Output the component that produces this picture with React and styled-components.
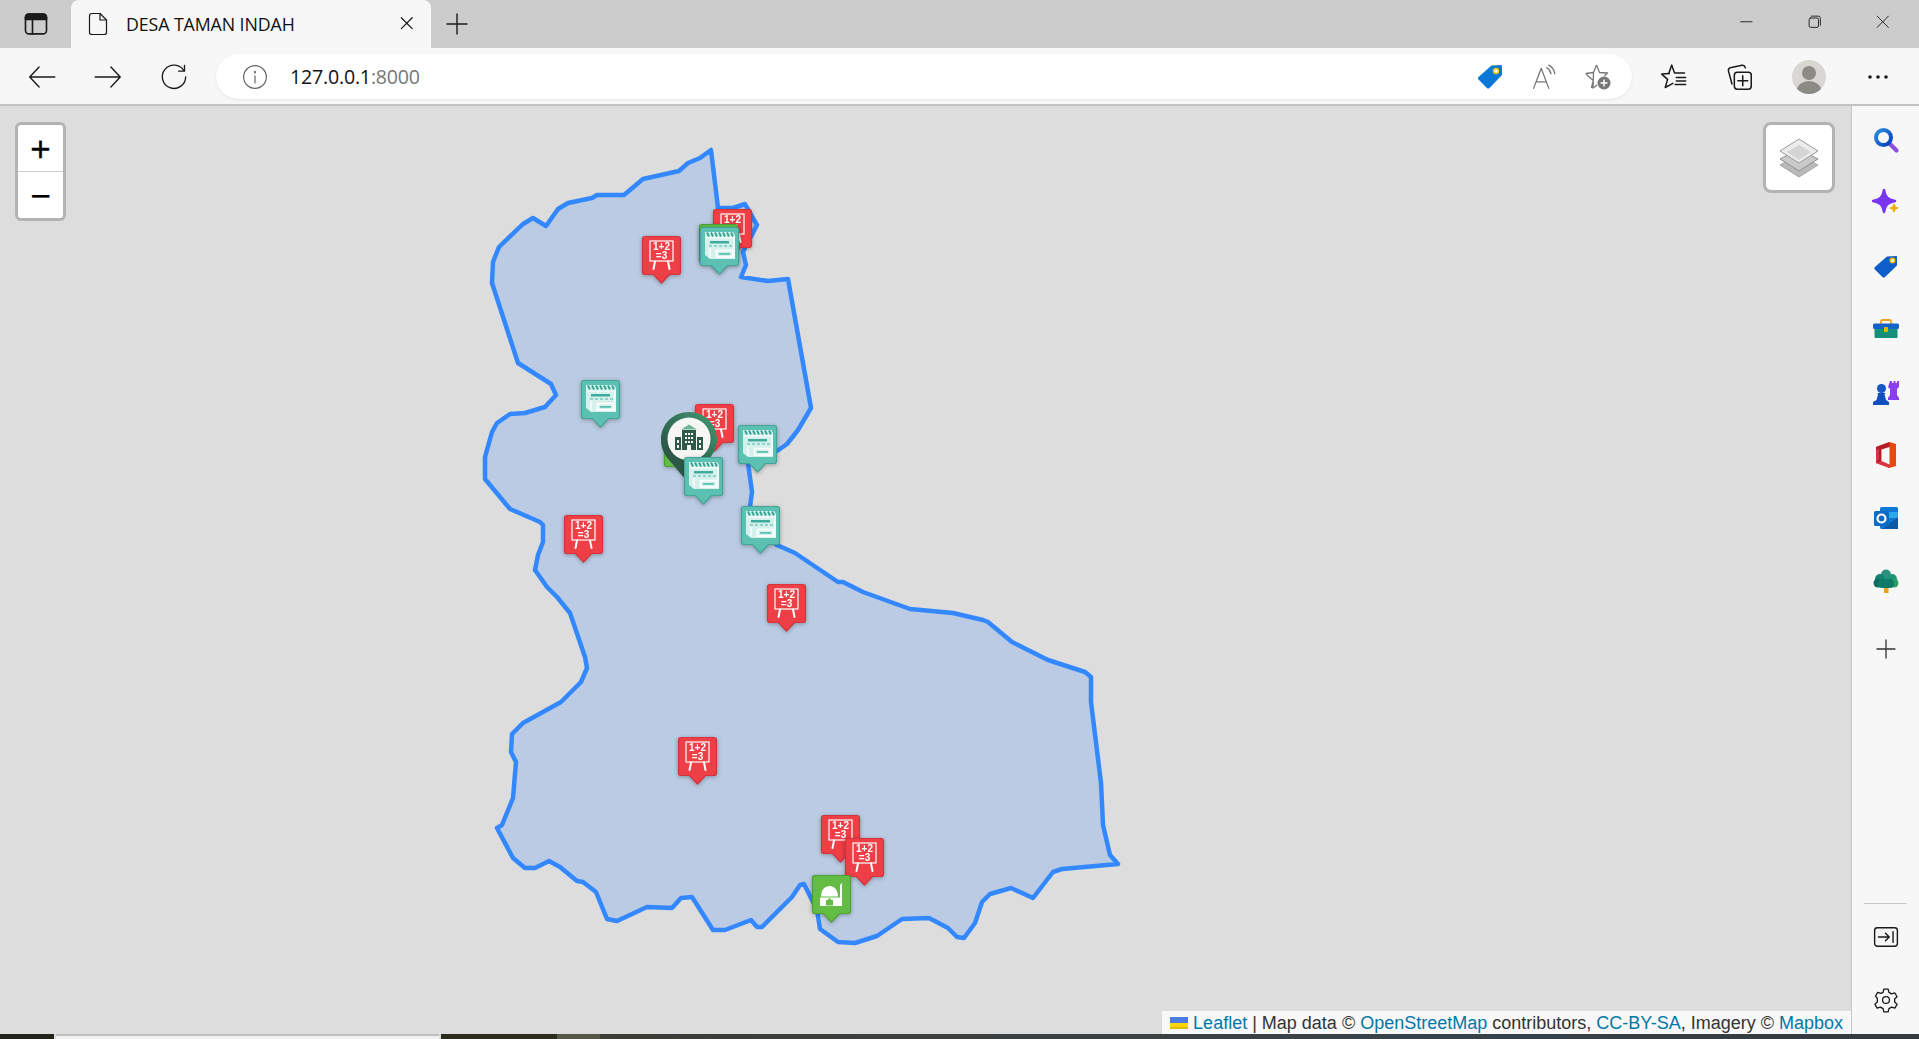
import React from "react";
import styled, { createGlobalStyle } from "styled-components";

const GlobalStyle = createGlobalStyle`
  html, body { margin: 0; padding: 0; background: #ddd; overflow: hidden; }
  #root { width: 1919px; height: 1039px; }
`;

const Page = styled.div`
  width: 1919px;
  height: 1039px;
  display: flex;
  flex-direction: column;
  font-family: "Open Sans", "Noto Sans", sans-serif;
  color: #111;
`;

const TabStrip = styled.div`
  height: 48px;
  flex: none;
  display: flex;
  background: #cccccc;
`;

const StripButton = styled.div`
  width: ${(p) => p.$w}px;
  height: 47px;
  flex: none;
  display: flex;
  align-items: center;
  justify-content: center;
`;

const Tab = styled.div`
  width: 360px;
  height: 48px;
  flex: none;
  background: #f7f7f7;
  border-radius: 8px 8px 0 0;
  display: flex;
  align-items: center;
  padding: 0 13px 0 15px;
  box-sizing: border-box;
`;

const TabTitle = styled.span`
  font-size: 17.8px;
  margin-left: 16px;
  flex: 1;
  white-space: nowrap;
  letter-spacing: -0.1px;
`;

const WindowControls = styled.div`
  margin-left: auto;
  display: flex;
`;

const Toolbar = styled.div`
  height: 58px;
  flex: none;
  box-sizing: border-box;
  display: flex;
  align-items: center;
  padding: 1px 8px 0 9px;
  background: #f7f7f7;
  border-bottom: 2px solid #c2c2c2;
`;

const ToolButton = styled.div`
  width: ${(p) => p.$w}px;
  height: 45px;
  flex: none;
  display: flex;
  align-items: center;
  justify-content: center;
`;

const AddressBar = styled.div`
  width: 1416px;
  height: 45px;
  margin: 0 8px 0 9px;
  flex: none;
  box-sizing: border-box;
  padding: 0 8px 0 26px;
  display: flex;
  align-items: center;
  background: #fff;
  border-radius: 23px;
  box-shadow: 0 1px 3px rgba(0, 0, 0, 0.08);
`;

const Url = styled.span`
  margin-left: 22px;
  flex: 1;
  font-size: 19.6px;
  letter-spacing: -0.2px;
`;

const UrlPort = styled.span`
  color: #767676;
`;

const Body = styled.div`
  flex: 1;
  display: flex;
  min-height: 0;
`;

const MapPane = styled.div`
  flex: 1;
  position: relative;
  overflow: hidden;
  background: #dddddd;
`;

const Boundary = styled.svg`
  position: absolute;
  inset: 0;
  width: 100%;
  height: 100%;
`;

const ZoomControl = styled.div`
  position: absolute;
  left: 15px;
  top: 16px;
  width: 45px;
  border: 3px solid #b3b3b3;
  border-radius: 6px;
  background: #fff;
  overflow: hidden;
`;

const ZoomButton = styled.div`
  height: 46px;
  display: flex;
  align-items: center;
  justify-content: center;
  font-family: "Liberation Sans", sans-serif;
  font-size: 35px;
  font-weight: 400;
  line-height: 1;
  color: #000;
  -webkit-text-stroke: 0.3px #000;
  &:first-child {
    border-bottom: 1px solid #ccc;
  }
`;

const LayersControl = styled.div`
  position: absolute;
  right: 16px;
  top: 16px;
  width: 66px;
  height: 65px;
  border: 3px solid #b3b3b3;
  border-radius: 8px;
  background: #fff;
  display: flex;
  align-items: center;
  justify-content: center;
`;

const Attribution = styled.div`
  position: absolute;
  right: 0;
  bottom: 0;
  height: 23px;
  box-sizing: border-box;
  padding: 1px 8px 0;
  display: flex;
  align-items: center;
  gap: 5px;
  background: rgba(255, 255, 255, 0.8);
  font-family: "Liberation Sans", sans-serif;
  font-size: 18px;
  color: #333;
  white-space: nowrap;
`;

const AttrLink = styled.a`
  color: #0078a8;
`;

const Pin = styled.div`
  position: absolute;
  left: ${(p) => p.$x - 3}px;
  top: ${(p) => p.$y - 109}px;
  width: 45px;
  height: 54px;
  filter: drop-shadow(0 1px 2px rgba(0, 0, 0, 0.3)) blur(0.35px);
`;

const SchoolMark = styled.div`
  position: absolute;
  left: 658px;
  top: 303px;
  width: 62px;
  height: 80px;
  filter: blur(0.4px);
`;

const SidePanel = styled.aside`
  width: 68px;
  flex: none;
  box-sizing: border-box;
  padding-top: 2px;
  display: flex;
  flex-direction: column;
  align-items: center;
  background: #f7f7f7;
  border-left: 1px solid #c6c6c6;
`;

const SideButton = styled.div`
  width: 100%;
  height: 63px;
  flex: none;
  margin-top: ${(p) => (p.$pushed ? 5 : 0)}px;
  display: flex;
  align-items: center;
  justify-content: center;
`;

const SideFoot = styled.div`
  margin-top: auto;
  width: 100%;
  padding-bottom: 3px;
  display: flex;
  flex-direction: column;
  align-items: center;
`;

const SideRule = styled.div`
  width: 43px;
  height: 1px;
  margin-bottom: 1px;
  background: #c8c8c8;
`;

const BottomEdge = styled.div`
  height: 5px;
  flex: none;
  display: flex;
`;

const EdgePiece = styled.div`
  width: ${(p) => p.$w}px;
  flex: ${(p) => (p.$w ? "none" : 1)};
  background: ${(p) => p.$bg};
  border-top: ${(p) => (p.$light ? "2px solid #c0c0c0" : "none")};
`;

const boundaryPoints = [
  [711, 150], [718, 208], [733, 208], [745, 204], [757, 225], [743, 252], [746, 265], [741, 277],
  [768, 281], [788, 279], [811, 408], [798, 430], [787, 444], [777, 451], [748, 463], [752, 492],
  [750, 507], [758, 530], [777, 545], [795, 553], [838, 582], [843, 582], [863, 592], [910, 609],
  [953, 613], [983, 620], [988, 622], [1012, 642], [1048, 660], [1085, 672], [1091, 677], [1091, 702],
  [1101, 783], [1103, 825], [1110, 855], [1118, 864], [1062, 869], [1053, 872], [1033, 898], [1011, 888],
  [990, 894], [982, 902], [975, 923], [964, 938], [957, 937], [948, 928], [929, 918], [902, 919],
  [877, 936], [855, 943], [838, 942], [820, 929], [817, 910], [804, 884], [800, 885], [792, 897],
  [762, 927], [757, 927], [751, 920], [725, 930], [713, 930], [692, 897], [681, 898], [672, 908],
  [647, 907], [617, 921], [607, 919], [596, 892], [583, 882], [577, 881], [560, 867], [549, 861],
  [535, 868], [525, 868], [513, 858], [497, 828], [502, 825], [513, 798], [516, 762], [511, 752],
  [512, 734], [523, 723], [561, 702], [581, 682], [587, 668], [585, 657], [570, 613], [557, 597],
  [547, 587], [535, 570], [538, 555], [543, 542], [543, 525], [540, 522], [510, 509], [485, 479],
  [485, 457], [492, 432], [497, 423], [510, 414], [525, 413], [545, 407], [556, 395], [551, 384],
  [518, 363], [492, 283], [493, 262], [499, 247], [523, 224], [533, 218], [546, 226], [558, 209],
  [568, 203], [592, 198], [597, 195], [624, 195], [643, 179], [679, 171], [688, 163], [700, 158],
]
  .map((p) => p.join(","))
  .join(" ");

// painted in this order, later ones lie on top
const markers = [
  { kind: "red", x: 713, y: 209 },
  { kind: "green", x: 699, y: 224 },
  { kind: "teal", x: 700, y: 227 },
  { kind: "red", x: 642, y: 236 },
  { kind: "teal", x: 581, y: 380 },
  { kind: "green", x: 664, y: 428 },
  { kind: "red", x: 695, y: 404 },
  { kind: "school" },
  { kind: "teal", x: 738, y: 425 },
  { kind: "teal", x: 684, y: 457 },
  { kind: "teal", x: 741, y: 506 },
  { kind: "red", x: 564, y: 515 },
  { kind: "red", x: 767, y: 584 },
  { kind: "red", x: 678, y: 737 },
  { kind: "red", x: 821, y: 815 },
  { kind: "red", x: 845, y: 838 },
  { kind: "mosque", x: 812, y: 875 },
];

const pinColors = {
  red: ["#ee3e46", "#d5343b"],
  teal: ["#5cc0b3", "#43a597"],
  green: ["#63bd44", "#4ca233"],
  mosque: ["#63bd44", "#4ca233"],
};

const BoardGlyph = () => (
  <g>
    <rect x="11" y="8" width="23" height="20" fill="none" stroke="#fff" strokeWidth="1.2" />
    <text x="22.5" y="17" fill="#fff" fontFamily="Liberation Sans" fontWeight="700" fontSize="10" textAnchor="middle">1+2</text>
    <text x="22.5" y="26" fill="#fff" fontFamily="Liberation Sans" fontWeight="700" fontSize="10" textAnchor="middle">=3</text>
    <path d="M16 28.500 14.500 36M29 28.500 30.500 36" stroke="#fff" strokeWidth="2" strokeLinecap="round" fill="none" />
  </g>
);

const StallGlyph = () => (
  <g>
    <path d="M8 8h28l2 3v24H13l-5-4z" fill="#d6f1ec" />
    <path d="M10 8.500l2 4M14 8.500l2 4M18 8.500l2 4M22 8.500l2 4M26 8.500l2 4M30 8.500l2 4M34 8.500l2 4" stroke="#3aa596" strokeWidth="2" />
    <path d="M9 14h28" stroke="#fff" strokeWidth="1" />
    <rect x="13" y="17" width="19" height="2.500" fill="#3fab9c" />
    <path d="M12 22h3M17 22h3M22 22h3M27 22h3M32 22h3" stroke="#76cbbf" strokeWidth="1.500" />
    <path d="M13 24v10M37 12v22" stroke="#fff" strokeWidth="1.200" />
    <rect x="19.500" y="26.500" width="16" height="6.500" fill="#d6f1ec" stroke="#fff" strokeWidth="1.500" />
    <rect x="22" y="29" width="11" height="1.800" fill="#5cc0b3" />
  </g>
);

const MosqueGlyph = () => (
  <g>
    <path d="M12 24.500c0-6.500 4-10.500 8.500-10.500S29 18 29 24.500z" fill="#fff" />
    <path d="M11 25.500h20V34H11z" fill="#fff" />
    <path d="M31 13l2-2v23h-2z" fill="#fff" />
    <path d="M17 33.500V28h1.500l2-2 2 2H24v5.500z" fill="#63bd44" />
  </g>
);

const MapPin = ({ kind, x, y }) => {
  const [fill, edge] = pinColors[kind];
  return (
    <Pin $x={x} $y={y}>
      <svg width="45" height="54" viewBox="0 0 45 54">
        <path
          d="M6 3.500h33a2.500 2.500 0 0 1 2.500 2.500v33a2.500 2.500 0 0 1-2.500 2.500h-8.500L22.500 50l-8-8.500H6A2.500 2.500 0 0 1 3.500 39V6A2.500 2.500 0 0 1 6 3.500z"
          fill={fill}
          stroke={edge}
          strokeWidth="1.2"
        />
        {kind === "red" && <BoardGlyph />}
        {kind === "teal" && <StallGlyph />}
        {kind === "mosque" && <MosqueGlyph />}
      </svg>
    </Pin>
  );
};

const SchoolPin = () => (
  <SchoolMark>
    <svg width="62" height="80" viewBox="0 0 62 80">
      <defs>
        <linearGradient id="schoolRing" x1="0.8" y1="0" x2="0.1" y2="1">
          <stop offset="0" stopColor="#3f9470" />
          <stop offset="0.6" stopColor="#2d5c48" />
          <stop offset="1" stopColor="#2e4f40" />
        </linearGradient>
      </defs>
      <path d="M31 3C15 3 3 15 3 31c0 8 3 14 8 20l23 27c1-9 5-17 11-23 8-6 14-14 14-24C59 15 47 3 31 3z" fill="url(#schoolRing)" />
      <circle cx="31" cy="30" r="21.500" fill="#f6f6f4" />
      <path d="M31 15.500l8 5h-16z" fill="#6fb596" />
      <path d="M24 21h14v20h-5v-5h-4v5h-5z" fill="#2e5a48" />
      <path d="M17 28h6v13h-6zM39 28h6v13h-6z" fill="#2e5a48" />
      <path d="M27 24h2v2h-2zM30 24h2v2h-2zM33 24h2v2h-2zM27 28h2v2h-2zM30 28h2v2h-2zM33 28h2v2h-2zM27 32h2v2h-2zM30 32h2v2h-2zM33 32h2v2h-2zM19 31h2v3h-2zM41 31h2v3h-2zM19 36h2v3h-2zM41 36h2v3h-2z" fill="#f6f6f4" />
    </svg>
  </SchoolMark>
);

const Line = ({ size = 24, children, stroke = "#1a1a1a", sw = 1.4 }) => (
  <svg width={size} height={size} viewBox="0 0 24 24" fill="none" stroke={stroke} strokeWidth={sw} strokeLinecap="round" strokeLinejoin="round">
    {children}
  </svg>
);

const SideIcon = ({ children }) => <svg width="28" height="28" viewBox="0 0 28 28">{children}</svg>;

const sideIcons = [
  <SideIcon key="search">
    <defs>
      <linearGradient id="lens" x1="0" y1="0" x2="1" y2="1">
        <stop offset="0" stopColor="#2a8fe0" />
        <stop offset="1" stopColor="#0a3fb8" />
      </linearGradient>
    </defs>
    <path d="M17 17l7.500 7.500" stroke="#8a4fe0" strokeWidth="4.200" strokeLinecap="round" />
    <circle cx="11.500" cy="11.500" r="7.500" fill="none" stroke="url(#lens)" strokeWidth="4" />
  </SideIcon>,
  <SideIcon key="spark">
    <path d="M12 1c1.200 7 3.500 9.600 11 11-7.500 1.400-9.800 4-11 11-1.200-7-3.500-9.600-11-11 7.500-1.400 9.800-4 11-11z" fill="#7a35f0" stroke="#7a35f0" strokeWidth="2.500" strokeLinejoin="round" />
    <path d="M22 15c.4 2.700 1.300 3.600 4 4-2.700.4-3.600 1.300-4 4-.4-2.700-1.300-3.600-4-4 2.700-.4 3.600-1.300 4-4z" fill="#f2a900" stroke="#f2a900" strokeWidth="1.200" strokeLinejoin="round" />
  </SideIcon>,
  <SideIcon key="tag">
    <path d="M15 4.500l9-.5c.8 0 1 .3 1 1v8.500L13 25c-.8.8-1.800.8-2.600 0l-7.500-7.500c-.8-.8-.8-1.800 0-2.600z" fill="#0c5fc9" />
    <circle cx="20.500" cy="8.500" r="2.300" fill="#fff" stroke="#f2b400" strokeWidth="1.400" />
  </SideIcon>,
  <SideIcon key="toolbox">
    <path d="M9 9V6.500C9 5.500 9.500 5 10.500 5h7c1 0 1.500.5 1.500 1.500V9" fill="none" stroke="#eda41c" strokeWidth="1.800" />
    <rect x="1" y="8.500" width="26" height="5.500" rx="1.500" fill="#1463c8" />
    <path d="M2.500 14h23v7.500c0 1-.5 1.500-1.500 1.500H4c-1 0-1.500-.5-1.500-1.500z" fill="#17907a" />
    <rect x="12" y="12" width="4" height="5" rx="1" fill="#f2b400" />
  </SideIcon>,
  <SideIcon key="chess">
    <path d="M18 3h2v2h1.500V3h2v2H25V3h2v6l-2 2v6l2 3v2H16v-2l2-3v-6l-2-2z" fill="#8a3ff0" />
    <circle cx="9.500" cy="10.500" r="4.500" fill="#1658c8" />
    <path d="M5.500 15h8l-1 1.500 1.500 5.500 3 2v3H1v-3l3.500-2 1.500-5.500z" fill="#0f4fc0" />
  </SideIcon>,
  <SideIcon key="office">
    <path d="M17.500 1L4 6v16l13.500 5L24 25V3z" fill="#e64a0c" />
    <path d="M17.500 1L4 6v16l5.500-2V8.500L17.500 6z" fill="#b11e28" />
    <path d="M4 22l13.500 5v-3.500L9.500 20z" fill="#d8344a" />
    <path d="M9.500 8.500l8-2.500v17.500l-8-3.500z" fill="#f7f7f7" />
    <path d="M4 9l3-1.500v11L4 21z" fill="#d3354f" />
  </SideIcon>,
  <SideIcon key="outlook">
    <rect x="8" y="3" width="18" height="22" rx="1.500" fill="#0f78d4" />
    <path d="M8 8h18v6H8z" fill="#28a8ea" />
    <path d="M26 13v12H10z" fill="#0a5aa8" />
    <rect x="2" y="7" width="15" height="15" rx="1.500" fill="#0a6cc8" />
    <circle cx="9.500" cy="14.500" r="4" fill="none" stroke="#fff" strokeWidth="2.200" />
  </SideIcon>,
  <SideIcon key="tree">
    <rect x="12" y="20" width="4.500" height="6" fill="#e8a21a" />
    <circle cx="14" cy="7.500" r="5" fill="#2e8f82" />
    <circle cx="8" cy="12" r="5" fill="#148272" />
    <circle cx="20" cy="12" r="5" fill="#1f9372" />
    <circle cx="6" cy="16" r="4.500" fill="#0c6e62" />
    <circle cx="22" cy="16" r="4.500" fill="#2b9e63" />
    <rect x="6" y="12" width="16" height="9" rx="4" fill="#0f7a68" />
  </SideIcon>,
];

export default function App() {
  return (
    <Page>
      <GlobalStyle />
      <TabStrip>
        <StripButton $w={71}>
          <Line size={28} sw={1.4}>
            <rect x="3" y="3.500" width="18" height="17" rx="3" />
            <path d="M3 6.500c0-2 1-3 3-3h12c2 0 3 1 3 3V8H3z" fill="#1a1a1a" />
            <path d="M9 8v12.500" />
          </Line>
        </StripButton>
        <Tab>
          <Line size={24} sw={1.2}>
            <path d="M3.500 4C3.500 2.300 4.500 1.500 6 1.500h8l6.500 6.500v12.500c0 1.500-1 2-2.500 2H6c-1.500 0-2.500-.5-2.500-2z" />
            <path d="M14 1.500V8h6.500" />
          </Line>
          <TabTitle>DESA TAMAN INDAH</TabTitle>
          <Line size={20} sw={1.5}>
            <path d="M4 4.500l13 13M17 4.500l-13 13" />
          </Line>
        </Tab>
        <StripButton $w={51}>
          <Line size={24} sw={1.4}>
            <path d="M12 2v20M2 12h20" />
          </Line>
        </StripButton>
        <WindowControls>
          <StripButton $w={68}>
            <Line size={18} sw={1.2}>
              <path d="M1 9h15" />
            </Line>
          </StripButton>
          <StripButton $w={68}>
            <Line size={18} sw={1.2}>
              <rect x="1.500" y="4" width="12.500" height="12.500" rx="2" />
              <path d="M4.500 1.500h9c2 0 3 1 3 3v9" />
            </Line>
          </StripButton>
          <StripButton $w={68}>
            <Line size={18} sw={1.2}>
              <path d="M1.500 1.500l15 15M16.500 1.500l-15 15" />
            </Line>
          </StripButton>
        </WindowControls>
      </TabStrip>

      <Toolbar>
        <ToolButton $w={66}>
          <Line size={28} sw={1.2}>
            <path d="M23 12H1.500M9.500 3.500L1.500 12l8 8.500" />
          </Line>
        </ToolButton>
        <ToolButton $w={66}>
          <Line size={28} sw={1.2}>
            <path d="M1 12h21.500M14.500 3.500l8 8.500-8 8.500" />
          </Line>
        </ToolButton>
        <ToolButton $w={66}>
          <Line size={28} sw={1.15}>
            <path d="M20.500 6.500A10 10 0 1 0 22 12" />
            <path d="M21 2v5h-5" />
          </Line>
        </ToolButton>
        <AddressBar>
          <Line size={26} stroke="#666" sw={1.1}>
            <circle cx="12" cy="12" r="10.500" />
            <path d="M12 11v6.500" />
            <path d="M12 7.200v.6" strokeWidth="1.800" />
          </Line>
          <Url>
            127.0.0.1<UrlPort>:8000</UrlPort>
          </Url>
          <ToolButton $w={57}>
            <svg width="26" height="26" viewBox="0 0 26 26">
              <path d="M14.500 1.500l9-.5c1 0 1.500.5 1.500 1.500v8.500L12.500 24c-.8.800-1.800.8-2.600 0L1.500 15.500c-.8-.8-.8-1.800 0-2.600z" fill="#0a78d6" />
              <circle cx="19" cy="7" r="2.500" fill="#fff" stroke="#f5c400" strokeWidth="1.500" />
            </svg>
          </ToolButton>
          <ToolButton $w={53}>
            <Line size={26} stroke="#777" sw={1.2}>
              <path d="M1.500 22.500L8.500 4l7 18.500M4 16.500h9" />
              <path d="M13.500 3.500c2 1 3.500 3 4 5.500M15.500 1c3 1.500 5 4.500 5.500 8" />
            </Line>
          </ToolButton>
          <ToolButton $w={53}>
            <svg width="28" height="28" viewBox="0 0 28 28">
              <path d="M12.500 2l3 7.500 8 .5-3 3M9 25l-1.500-.5 1.800-7L3 12l-1-1.500 7.500-1z" fill="none" stroke="#777" strokeWidth="1.300" strokeLinejoin="round" />
              <path d="M12.500 2L9.500 9.500M9.300 24.800l4-2.800" fill="none" stroke="#777" strokeWidth="1.300" />
              <circle cx="20" cy="20" r="6.500" fill="#777" />
              <path d="M20 16.500v7M16.500 20h7" stroke="#fff" strokeWidth="1.500" />
            </svg>
          </ToolButton>
        </AddressBar>
        <ToolButton $w={68}>
          <Line size={28} sw={1.3}>
            <path d="M10 2l2.500 6.500H21M8 9L1.500 9.500l5 4.500L4.500 21l6.500-3.500" />
            <path d="M10 2L7.500 9M14 12.500h8M14 15.500h8M13 18.500h9" />
          </Line>
        </ToolButton>
        <ToolButton $w={62}>
          <Line size={28} sw={1.3}>
            <path d="M6 18L3 7c-.4-1.500.5-2.500 1.500-3l10-2c1.500-.3 2.500.5 3 2" />
            <rect x="8" y="8" width="14.500" height="14.500" rx="2.500" />
            <path d="M15.200 11v8.500M11 15.200h8.500" />
          </Line>
        </ToolButton>
        <ToolButton $w={78}>
          <svg width="34" height="34" viewBox="0 0 34 34">
            <defs>
              <clipPath id="avatar">
                <circle cx="17" cy="17" r="17" />
              </clipPath>
            </defs>
            <circle cx="17" cy="17" r="17" fill="#d8d7d3" />
            <g clipPath="url(#avatar)" fill="#8b8a85">
              <circle cx="17" cy="13" r="7" />
              <ellipse cx="17" cy="30" rx="12" ry="9" />
            </g>
          </svg>
        </ToolButton>
        <ToolButton $w={60}>
          <svg width="22" height="6" viewBox="0 0 22 6" fill="#1a1a1a">
            <circle cx="3" cy="3" r="1.800" />
            <circle cx="11" cy="3" r="1.800" />
            <circle cx="19" cy="3" r="1.800" />
          </svg>
        </ToolButton>
      </Toolbar>

      <Body>
        <MapPane>
          <Boundary viewBox="0 106 1851 928" preserveAspectRatio="xMinYMin slice">
            <polygon
              points={boundaryPoints}
              fill="#3388ff"
              fillOpacity="0.2"
              stroke="#3388ff"
              strokeWidth="4.5"
              strokeLinejoin="round"
            />
          </Boundary>
          {markers.map((m, i) =>
            m.kind === "school" ? <SchoolPin key={i} /> : <MapPin key={i} {...m} />
          )}
          <ZoomControl>
            <ZoomButton>+</ZoomButton>
            <ZoomButton>−</ZoomButton>
          </ZoomControl>
          <LayersControl>
            <svg width="42" height="40" viewBox="0 0 42 40">
              <path d="M21 17L40 27 21 39 2 27z" fill="#b9b9b9" stroke="#a8a8a8" />
              <path d="M21 11L40 21 21 33 2 21z" fill="#c9c9c9" stroke="#8f8f8f" />
              <path d="M21 1L40 13 21 25 2 13z" fill="#ececec" stroke="#9a9a9a" />
              <path d="M21 7L33 14 21 22 9 14z" fill="#d4d4d4" />
            </svg>
          </LayersControl>
          <Attribution>
            <svg width="18" height="12" viewBox="0 0 18 12">
              <path d="M0 0h18v6H0z" fill="#4c7be1" />
              <path d="M0 6h18v4H0z" fill="#ffd500" />
              <path d="M0 10h18v2H0z" fill="#e0bc00" />
            </svg>
            <span>
              <AttrLink>Leaflet</AttrLink> | Map data © <AttrLink>OpenStreetMap</AttrLink> contributors,{" "}
              <AttrLink>CC-BY-SA</AttrLink>, Imagery © <AttrLink>Mapbox</AttrLink>
            </span>
          </Attribution>
        </MapPane>
        <SidePanel>
          {sideIcons.map((icon) => (
            <SideButton key={icon.key}>{icon}</SideButton>
          ))}
          <SideButton $pushed>
            <Line size={24} stroke="#333" sw={1.3}>
              <path d="M12 3v18M3 12h18" />
            </Line>
          </SideButton>
          <SideFoot>
            <SideRule />
            <SideButton>
              <Line size={26} sw={1.3}>
                <rect x="1.500" y="3.500" width="21" height="17" rx="2.500" />
                <path d="M5 12h10M11.500 8.500L15 12l-3.500 3.500M18.500 7v10" />
              </Line>
            </SideButton>
            <SideButton>
              <Line size={26} sw={1.2}>
                <circle cx="12" cy="12" r="3.200" />
                <path d="M10 2h4l.7 3 2.500 1.400 3-.9 2 3.500-2.200 2.100v2.800l2.200 2.100-2 3.500-3-.9-2.500 1.400-.7 3h-4l-.7-3-2.500-1.400-3 .9-2-3.500 2.200-2.100V10.600L2.300 8.500l2-3.500 3 .9L9.300 5z" />
              </Line>
            </SideButton>
          </SideFoot>
        </SidePanel>
      </Body>

      <BottomEdge>
        <EdgePiece $w={54} $bg="#22231a" />
        <EdgePiece $w={2} $bg="#dddddd" />
        <EdgePiece $w={383} $bg="#f0f0f0" $light />
        <EdgePiece $w={2} $bg="#dddddd" />
        <EdgePiece $w={116} $bg="#2b2b1f" />
        <EdgePiece $w={43} $bg="#56574b" />
        <EdgePiece $bg="linear-gradient(90deg, #3c3d36, #3a434a 60%, #333a40)" />
      </BottomEdge>
    </Page>
  );
}
